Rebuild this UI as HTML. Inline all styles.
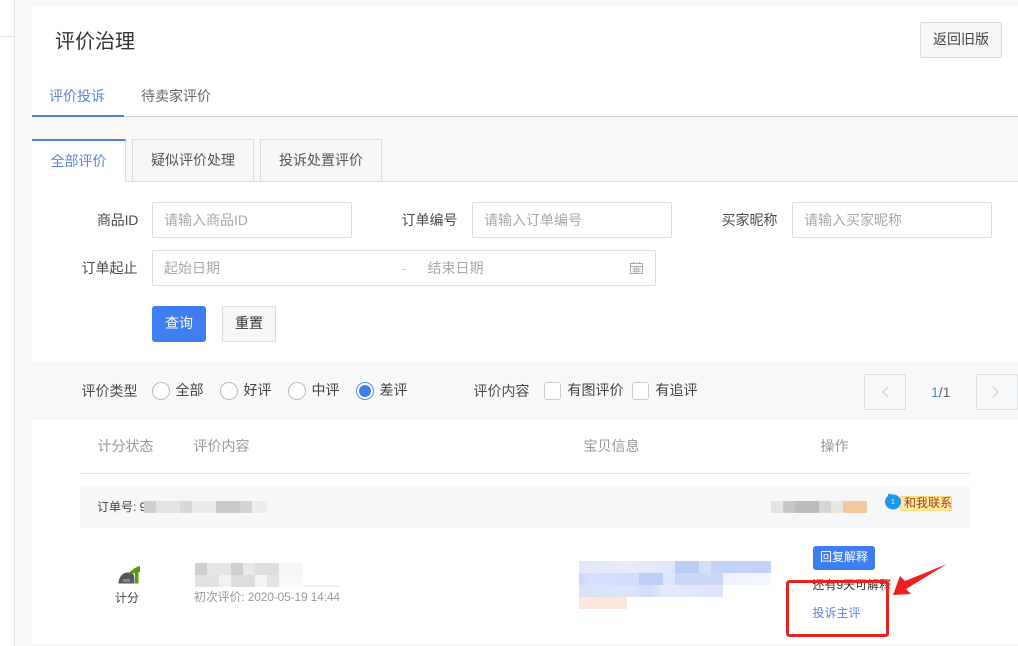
<!DOCTYPE html>
<html lang="zh"><head><meta charset="utf-8"><style>
html,body{margin:0;padding:0}
body{width:1018px;height:646px;overflow:hidden;position:relative;background:#f8f8f8;font-family:"Liberation Sans","Noto Sans CJK SC",sans-serif;font-size:14px;color:#444}
div{position:absolute;box-sizing:border-box}
.t{white-space:nowrap;line-height:20px;height:20px;margin-left:-1px}
.white{background:#fff}
.inp{background:#fff;border:1px solid #dcdee0;border-radius:2px;height:36px}
.ph{color:#a8a8a8}
.lab{color:#4a4a4a}
.tab{background:#f6f7f8;border:1px solid #d8dadc;height:43px;text-align:center;line-height:41px;color:#555}
.r{width:18px;height:18px;border:1px solid #bdbdbd;border-radius:50%;background:#fff}
.c{width:17px;height:18px;border:1px solid #c9ccd0;border-radius:3px;background:#fff}
.pg{width:42px;height:36px;border:1px solid #dcdfe2;border-radius:2px;background:#f7f8f9}
</style></head><body>
<div class="white" style="left:0;top:0;width:14px;height:646px"></div>
<div style="left:14px;top:0;width:1px;height:646px;background:#e6e6e6"></div>
<div style="left:0;top:36px;width:14px;height:1px;background:#e4e4e4"></div>

<div class="white" style="left:32px;top:6px;width:986px;height:110px"></div>
<div class="t" style="left:56px;top:30px;font-size:20px;line-height:24px;height:24px;color:#333">评价治理</div>
<div style="left:920px;top:22px;width:82px;height:36px;background:#f6f7f8;border:1px solid #d8dadc;border-radius:2px;text-align:center;line-height:32px;color:#444">返回旧版</div>
<div class="t" style="left:50px;top:86px;color:#5b84d8">评价投诉</div>
<div class="t" style="left:142px;top:86px;color:#666">待卖家评价</div>
<div style="left:32px;top:116px;width:986px;height:1px;background:#cfd1d3"></div>
<div style="left:32px;top:115px;width:92px;height:2px;background:#4d7fdc"></div>

<div style="left:32px;top:181px;width:986px;height:1px;background:#d8dadc"></div>
<div class="tab" style="left:132px;top:139px;width:122px">疑似评价处理</div>
<div class="tab" style="left:260px;top:139px;width:122px">投诉处置评价</div>
<div style="left:32px;top:139px;width:94px;height:44px;background:#fff;border-right:1px solid #d8dadc;border-top:2px solid #4d7fdc;text-align:center;line-height:40px;color:#5b84d8">全部评价</div>

<div class="white" style="left:32px;top:182px;width:986px;height:180px"></div>
<div class="t lab" style="left:98px;top:210px;letter-spacing:-.2px">商品ID</div>
<div class="inp" style="left:152px;top:202px;width:200px"></div>
<div class="t ph" style="left:165px;top:210px">请输入商品ID</div>
<div class="t lab" style="left:402.5px;top:210px">订单编号</div>
<div class="inp" style="left:472px;top:202px;width:200px"></div>
<div class="t ph" style="left:485px;top:210px">请输入订单编号</div>
<div class="t lab" style="left:722.5px;top:210px">买家昵称</div>
<div class="inp" style="left:792px;top:202px;width:200px"></div>
<div class="t ph" style="left:805px;top:210px">请输入买家昵称</div>
<div class="t lab" style="left:82.5px;top:258px">订单起止</div>
<div class="inp" style="left:152px;top:250px;width:504px"></div>
<div class="t ph" style="left:165px;top:258px">起始日期</div>
<div class="t ph" style="left:403px;top:258px;color:#c4c4c4">-</div>
<div class="t ph" style="left:428.5px;top:258px">结束日期</div>
<svg style="position:absolute;left:630px;top:261px" width="13" height="13" viewBox="0 0 13 13" fill="none" stroke="#aaa"><path d="M.5 2.5h12v10H.5zM.5 5.5h12M3.5 1v2M9.5 1v2M2.5 8h8M2.5 10.3h8" /><path d="M4.5 6v6M6.5 6v6M8.5 6v6" stroke-width=".6"/></svg>
<div style="left:152px;top:306px;width:54px;height:36px;background:#3f7ef2;border-radius:3px;color:#fff;text-align:center;line-height:34px">查询</div>
<div style="left:222px;top:306px;width:54px;height:36px;background:#f6f7f8;border:1px solid #d8dadc;border-radius:2px;color:#333;text-align:center;line-height:32px">重置</div>

<div class="t lab" style="left:82.5px;top:381px">评价类型</div>
<div class="r" style="left:152px;top:382px"></div><div class="t" style="left:176.5px;top:380px">全部</div>
<div class="r" style="left:220px;top:382px"></div><div class="t" style="left:244.5px;top:380px">好评</div>
<div class="r" style="left:288px;top:382px"></div><div class="t" style="left:312.5px;top:380px">中评</div>
<div class="r" style="left:356px;top:382px;border-color:#5b8def"></div><div style="left:359px;top:385px;width:12px;height:12px;border-radius:50%;background:#3f7ef2"></div><div class="t" style="left:380.5px;top:380px">差评</div>
<div class="t lab" style="left:474.5px;top:381px">评价内容</div>
<div class="c" style="left:544px;top:382px"></div><div class="t" style="left:568.5px;top:380px">有图评价</div>
<div class="c" style="left:632px;top:382px"></div><div class="t" style="left:656.5px;top:380px">有追评</div>
<div class="pg" style="left:864px;top:374px"></div>
<svg style="position:absolute;left:880px;top:385px" width="10" height="14" viewBox="0 0 10 14" fill="none" stroke="#cdd0d3" stroke-width="1.2"><path d="M8 2 3 7l5 5"/></svg>
<div class="t" style="left:932px;top:382px;color:#666"><span style="color:#5b84d8">1</span>/1</div>
<div class="pg" style="left:976px;top:374px"></div>
<svg style="position:absolute;left:991px;top:385px" width="10" height="14" viewBox="0 0 10 14" fill="none" stroke="#cdd0d3" stroke-width="1.2"><path d="M2 2l5 5-5 5"/></svg>

<div class="white" style="left:32px;top:420px;width:986px;height:226px"></div>
<div class="t" style="left:98.5px;top:436px;color:#999">计分状态</div>
<div class="t" style="left:194.5px;top:436px;color:#999">评价内容</div>
<div class="t" style="left:584.5px;top:436px;color:#999">宝贝信息</div>
<div class="t" style="left:821.5px;top:436px;color:#999">操作</div>
<div style="left:80px;top:473px;width:890px;height:1px;background:#e4e5e7"></div>
<div style="left:80px;top:486px;width:890px;height:42px;background:#f6f7f9"></div>
<div class="t" style="left:98px;top:497px;font-size:12px;color:#444">订单号: 9</div>

<div style="left:144px;top:501px;width:123px;height:12px;background:linear-gradient(90deg,#cfcfcf 0,#cfcfcf 12px,#e4e4e4 12px,#e4e4e4 36px,#d8d8d8 36px,#d8d8d8 48px,#eaeaea 48px,#eaeaea 72px,#c9c9c9 72px,#c9c9c9 96px,#d4d4d4 96px,#d4d4d4 108px,#ececec 108px)"></div>

<div style="left:771px;top:501px;width:96px;height:12px;background:linear-gradient(90deg,#e4e4e4 0,#e4e4e4 12px,#c8c8c8 12px,#c8c8c8 24px,#bcbcbc 24px,#bcbcbc 48px,#d6d6d6 48px,#d6d6d6 60px,#ebe6e0 60px,#ebe6e0 72px,#f2c99a 72px)"></div>
<div style="left:900px;top:496px;width:52px;height:15px;background:#fdeca4;border:1px solid #f6dc7c;border-radius:2px"></div>
<svg style="position:absolute;left:885px;top:492px" width="18" height="18" viewBox="0 0 18 18"><path d="M3 1.500C3.500 3 3 3.500 2.500 4.500A8 7.500 0 1 0 9 2.500C7 2.500 5 2.500 3 1.500z" fill="#1d97ea"/></svg>
<div style="left:885px;top:495px;width:16px;height:15px;color:#fff;font-size:7px;line-height:15px;text-align:center">1</div>
<div class="t" style="left:904px;top:494px;font-size:12px;color:#a83c10;line-height:19px;margin-left:0">和我联系</div>

<svg style="position:absolute;left:118px;top:565px" width="23" height="20" viewBox="0 0 23 20"><path d="M.5 18.500c0-4 2-8 5-10 3-1.500 8-1.500 10 1 1 2 1 6 1 9z" fill="#585858"/><path d="M5 14h7v3H5z" fill="#8a8a8a"/><path d="M17 18.500V6h3.500v12.500zM10 8c3-1 6-6 12-7v6l-5 1c-2 .5-5 1-7 0z" fill="#5a9a10"/></svg>
<div class="t" style="left:116px;top:588px;font-size:12px;color:#444">计分</div>

<div style="left:195px;top:563px;width:108px;height:12px;background:linear-gradient(90deg,#cfcfcf 0,#cfcfcf 12px,#e6e6e6 12px,#e6e6e6 36px,#cfcfcf 36px,#cfcfcf 48px,#e8e8e8 48px,#e8e8e8 60px,#dedede 60px,#dedede 84px,#f6f6f6 84px)"></div>
<div style="left:195px;top:575px;width:108px;height:12px;background:linear-gradient(90deg,#e2e2e2 0,#e2e2e2 24px,#f2f2f2 24px,#f2f2f2 36px,#dcdcdc 36px,#dcdcdc 60px,#f4f4f4 60px,#f4f4f4 72px,#e4e4e4 72px,#e4e4e4 84px,#f9f9f9 84px)"></div>
<div style="left:303px;top:585px;width:36px;height:2px;background:#f0f0f0"></div>
<div class="t" style="left:195px;top:587px;font-size:12px;color:#999;letter-spacing:-.16px">初次评价: 2020-05-19 14:44</div>

<div style="left:579px;top:561px;width:192px;height:12px;background:linear-gradient(90deg,#e2e8fa 0,#e8ecfb 48px,#e0e7fa 96px,#b9cdf6 96px,#b9cdf6 120px,#d4dffa 120px,#d4dffa 132px,#c3d3f7 132px)"></div>
<div style="left:579px;top:573px;width:192px;height:12px;background:linear-gradient(90deg,#c9d7f8 0,#d6e0fa 12px,#d0dcf9 60px,#bccff6 60px,#bccff6 84px,#dee6fb 84px,#dee6fb 96px,#cbd8f8 96px,#cbd8f8 144px,#edf1fd 144px,#f6f8fe 192px)"></div>
<div style="left:579px;top:585px;width:144px;height:12px;background:linear-gradient(90deg,#dbe1f6 0,#dde4f8 48px,#d2dcf8 72px,#e6ebfb 84px,#dde5fa 144px)"></div>
<div style="left:579px;top:597px;width:48px;height:12px;background:#fde8de"></div>

<div style="left:813px;top:546px;width:62px;height:24px;background:#3f7ef2;border-radius:3px;color:#fff;font-size:12px;text-align:center;line-height:23px">回复解释</div>
<div class="t" style="left:813.500px;top:575px;font-size:12px;color:#333">还有9天可解释</div>
<div class="t" style="left:813.500px;top:603px;font-size:12px;color:#5b84d8">投诉主评</div>
<div style="left:32px;top:644px;width:986px;height:2px;background:#f6f7f9"></div>

<svg style="position:absolute;left:0;top:0" width="1018" height="646" viewBox="0 0 1018 646" fill="none"><rect x="787.500" y="581.500" width="100" height="54" rx="2" stroke="#e8231f" stroke-width="3"/><path d="M947 564 905 581l-5-5-7 19 18-1-5-5z" fill="#ee1f1c"/></svg>
</body></html>
